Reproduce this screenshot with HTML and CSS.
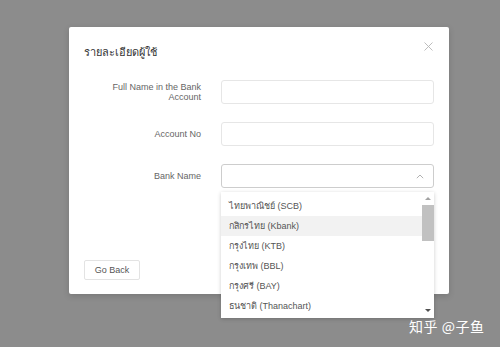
FILE: index.html
```html
<!DOCTYPE html>
<html>
<head>
  <meta charset="UTF-8">
  <title>รายละเอียดผู้ใช้</title>
  <link rel="stylesheet" href="styles.css">
</head>
<body>
  <div class="modal">
    <div class="modal-header">
      <h2 class="modal-title">รายละเอียดผู้ใช้</h2>
      <svg class="close-icon" width="9" height="9" viewBox="0 0 9 9">
        <path d="M0.5 0.5 L8.5 8.5 M8.5 0.5 L0.5 8.5" stroke="#b5b5b5" stroke-width="0.9" fill="none"/>
      </svg>
    </div>

    <div class="form">
      <div class="form-row">
        <label class="form-label">Full Name in the Bank Account</label>
        <div class="form-input"></div>
      </div>
      <div class="form-row">
        <label class="form-label">Account No</label>
        <div class="form-input"></div>
      </div>
      <div class="form-row">
        <label class="form-label">Bank Name</label>
        <div class="select-wrap">
          <div class="form-input select-open">
            <svg class="caret" width="8" height="5" viewBox="0 0 8 5">
              <path d="M0.8 4.2 L4 1 L7.2 4.2" stroke="#a8a8a8" stroke-width="0.9" fill="none"/>
            </svg>
          </div>
          <div class="dropdown">
            <ul class="option-list">
              <li class="option">ไทยพาณิชย์ (SCB)</li>
              <li class="option option-hover">กสิกรไทย (Kbank)</li>
              <li class="option">กรุงไทย (KTB)</li>
              <li class="option">กรุงเทพ (BBL)</li>
              <li class="option">กรุงศรี (BAY)</li>
              <li class="option">ธนชาติ (Thanachart)</li>
            </ul>
            <div class="scrollbar">
              <span class="scroll-arrow up"></span>
              <span class="scroll-thumb"></span>
              <span class="scroll-arrow down"></span>
            </div>
          </div>
        </div>
      </div>
    </div>

    <div class="modal-footer">
      <button class="btn">Go Back</button>
    </div>
  </div>

  <div class="watermark">知乎 @子鱼</div>
</body>
</html>
```

FILE: styles.css
```css
/* Base */
body {
  margin: 0;
  padding: 27px 0 0 69px;
  height: 347px;
  box-sizing: border-box;
  background: #8c8c8c;
  font-family: "Liberation Sans", "Noto Sans", "Noto Sans CJK SC", sans-serif;
  color: #666;
  overflow: hidden;
}

/* Modal */
.modal {
  width: 380px;
  height: 267px;
  box-sizing: border-box;
  background: #fff;
  border-radius: 2px;
  padding: 17px 15px 15px;
  box-shadow: 0 2px 6px rgba(0,0,0,0.15);
}

.modal-header {
  display: flex;
  justify-content: space-between;
  align-items: flex-start;
}

.modal-title {
  margin: 0;
  font-size: 11px;
  font-weight: normal;
  line-height: 16px;
  color: #333;
}

.close-icon {
  margin-top: -2px;
  margin-right: 1px;
}

/* Form */
.form {
  margin-top: 20px;
  display: flex;
  flex-direction: column;
  gap: 18px;
}

.form-row {
  display: flex;
  align-items: center;
}

.form-label {
  width: 117px;
  padding-right: 20px;
  text-align: right;
  font-size: 9px;
  line-height: 10px;
  color: #666;
}

.form-input {
  width: 213px;
  height: 24px;
  box-sizing: border-box;
  border: 1px solid #e6e6e6;
  border-radius: 3px;
  background: #fff;
}

.select-wrap {
  position: relative;
}

.select-open {
  border-color: #cdcdcd;
  display: flex;
  align-items: center;
  justify-content: flex-end;
  padding-right: 9px;
}

.caret {
  display: block;
}

/* Dropdown */
.dropdown {
  position: absolute;
  top: 28px;
  left: 0;
  width: 213px;
  height: 126px;
  background: #fff;
  box-shadow: 0 1px 4px rgba(0,0,0,0.2);
  display: flex;
  z-index: 2;
}

.option-list {
  list-style: none;
  margin: 0;
  padding: 4px 0 0;
  flex: 1;
  overflow: hidden;
}

.option {
  height: 20px;
  line-height: 20px;
  padding-left: 8px;
  font-size: 9px;
  color: #555;
  white-space: nowrap;
}

.option-hover {
  background: #f2f2f2;
}

.scrollbar {
  width: 12px;
  display: flex;
  flex-direction: column;
  align-items: center;
  background: #fff;
}

.scroll-arrow {
  width: 0;
  height: 0;
  border-left: 3px solid transparent;
  border-right: 3px solid transparent;
}

.scroll-arrow.up {
  margin-top: 5px;
  border-bottom: 3px solid #a3a3a3;
}

.scroll-thumb {
  width: 12px;
  height: 36px;
  margin-top: 5px;
  background: #c1c1c1;
}

.scroll-arrow.down {
  margin-top: auto;
  margin-bottom: 6px;
  border-top: 3px solid #505050;
}

/* Footer */
.modal-footer {
  margin-top: 71px;
}

.btn {
  width: 56px;
  height: 20px;
  padding: 0;
  font-family: inherit;
  font-size: 9px;
  color: #555;
  background: #fff;
  border: 1px solid #e3e3e3;
  border-radius: 2px;
}

/* Watermark */
.watermark {
  position: absolute;
  left: 409px;
  top: 316px;
  font-size: 14px;
  color: #fff;
  letter-spacing: 0.5px;
  font-family: "Noto Sans CJK SC", sans-serif;
}
```
